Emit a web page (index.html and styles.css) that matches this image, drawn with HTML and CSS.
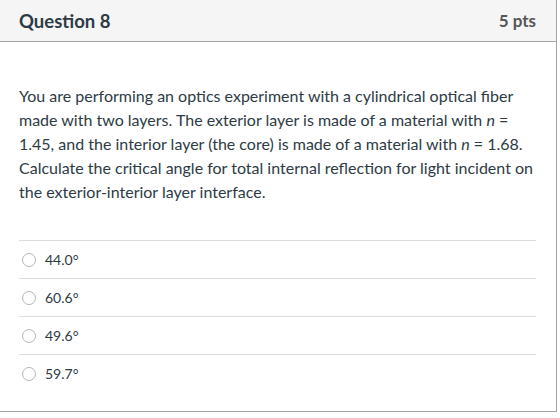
FILE: index.html
```html
<!DOCTYPE html>
<html lang="en">
<head>
    <meta charset="UTF-8">
    <title>Question 8</title>
    <link rel="stylesheet" href="styles.css">
</head>
<body>
    <div class="question">
        <div class="question-header">
            <h2>Question 8</h2>
            <span class="points">5 pts</span>
        </div>
        <div class="question-body">
            <p class="question-text">You are performing an optics experiment with a cylindrical optical fiber made with two layers. The exterior layer is made of a material with <em>n</em> = 1.45, and the interior layer (the core) is made of a material with <em>n</em> = 1.68. Calculate the critical angle for total internal reflection for light incident on the exterior-interior layer interface.</p>
            <ul class="answers">
                <li><span class="radio"></span>44.0°</li>
                <li><span class="radio"></span>60.6°</li>
                <li><span class="radio"></span>49.6°</li>
                <li><span class="radio"></span>59.7°</li>
            </ul>
        </div>
    </div>
</body>
</html>
```
FILE: styles.css
```css
body {
    margin: 0;
    font-family: Lato, "Open Sans", sans-serif;
    color: #2d3b45;
    background: white;
}

.question {
    width: 556px;
    height: 411px;
    margin-left: -1px;
    border: 1px solid #a5a5a5;
    border-top: none;
    box-sizing: content-box;
    background: white;
}

.question-header {
    display: flex;
    justify-content: space-between;
    align-items: center;
    height: 41px;
    padding: 0 20px 0 19px;
    background: #f5f5f5;
    border-bottom: 1px solid #a5a5a5;
}

.question-header h2 {
    margin: 0;
    font-size: 18.5px;
    font-weight: bold;
}

.points {
    font-size: 17px;
    font-weight: bold;
    color: #555;
}

.question-body {
    padding: 42px 20px 0 19px;
}

.question-text {
    margin: 0;
    font-size: 16px;
    line-height: 24px;
}

.answers {
    list-style: none;
    margin: 36px 0 0;
    padding: 0;
}

.answers li {
    display: flex;
    align-items: center;
    height: 37px;
    border-top: 1px solid #dcdcdc;
    font-size: 14px;
}

.radio {
    width: 12px;
    height: 12px;
    border: 1px solid #b5b5b5;
    border-radius: 50%;
    margin: 0 9px 0 3px;
}
```
